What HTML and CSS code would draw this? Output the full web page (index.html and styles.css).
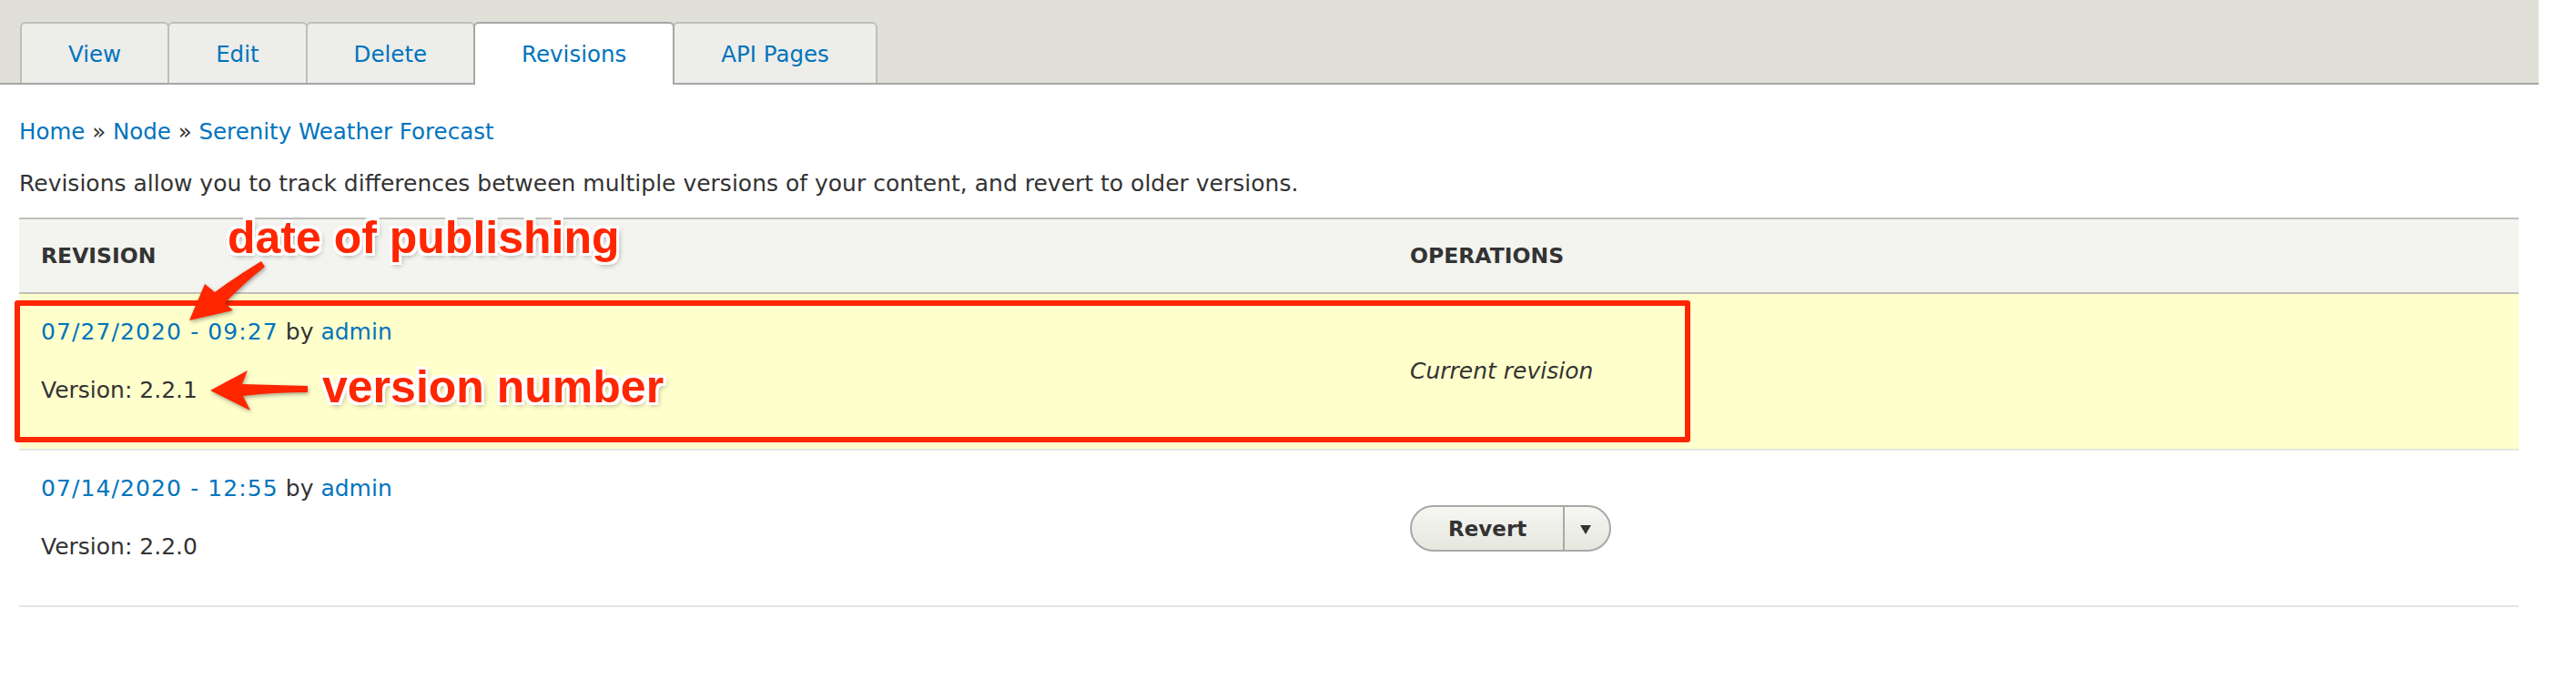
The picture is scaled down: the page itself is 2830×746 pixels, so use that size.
FILE: index.html
```html
<!DOCTYPE html>
<html lang="en">
<head>
<meta charset="utf-8">
<title>Revisions for Serenity Weather Forecast</title>
<link rel="stylesheet" href="styles.css">
</head>
<body>
<header class="tabs-bar">
  <nav class="tabs">
    <a class="tab" href="#">View</a>
    <a class="tab" href="#">Edit</a>
    <a class="tab" href="#">Delete</a>
    <a class="tab tab-active" href="#">Revisions</a>
    <a class="tab" href="#">API Pages</a>
  </nav>
</header>
<main class="content">
  <div class="breadcrumb"><a href="#">Home</a> » <a href="#">Node</a> » <a href="#">Serenity Weather Forecast</a></div>
  <p class="desc">Revisions allow you to track differences between multiple versions of your content, and revert to older versions.</p>
  <table class="revisions">
    <colgroup><col class="col-rev"><col class="col-ops"></colgroup>
    <thead>
      <tr><th>Revision</th><th>Operations</th></tr>
    </thead>
    <tbody>
      <tr class="row-current">
        <td><a class="rev-date" href="#">07/27/2020 - 09:27</a> by <a href="#">admin</a><p class="log">Version: 2.2.1</p></td>
        <td class="ops"><em>Current revision</em></td>
      </tr>
      <tr>
        <td><a class="rev-date" href="#">07/14/2020 - 12:55</a> by <a href="#">admin</a><p class="log">Version: 2.2.0</p></td>
        <td class="ops">
          <div class="dropbutton"><span class="db-main">Revert</span><span class="db-toggle"><span class="db-tri"></span></span></div>
        </td>
      </tr>
    </tbody>
  </table>
</main>

<div class="annot-box"></div>
<div class="annot-label label-date">date of publishing</div>
<div class="annot-label label-version">version number</div>
<svg class="annot-arrows" width="2830" height="746" viewBox="0 0 2830 746" xmlns="http://www.w3.org/2000/svg">
  <path d="M208,352 L225,312 L236,321 Q262,302 287,287 L291,293 Q268,311 247,333 L256,341 Z" fill="#ff2600"/>
  <path d="M231,429 L272,407 L266,422 Q300,423 338,424 L338,431 Q300,431 267,435 L275,451 Z" fill="#ff2600"/>
</svg>
</body>
</html>
```

FILE: styles.css
```css
html, body {
  margin: 0;
  padding: 0;
  background: #fff;
}
body {
  position: relative;
  font-family: "DejaVu Sans", "Liberation Sans", sans-serif;
  font-size: 25px;
  color: #333;
  width: 2830px;
  height: 746px;
  overflow: hidden;
}
a {
  color: #0074bd;
  text-decoration: none;
}

/* Tabs bar */
.tabs-bar {
  display: flex;
  align-items: flex-end;
  height: 91px;
  margin-right: 41px;
  background: #e0e0d8;
  border-bottom: 2px solid #a6a6a6;
  padding-left: 22px;
}
.tabs {
  display: flex;
  align-items: flex-end;
}
.tab {
  display: block;
  height: 65px;
  line-height: 67px;
  padding: 0 51px;
  font-size: 24.5px;
  background: #ededea;
  border: 2px solid #bfbfba;
  border-bottom: none;
  border-radius: 6px 6px 0 0;
  margin-left: -2px;
}
.tab:first-child {
  margin-left: 0;
}
.tab-active {
  position: relative;
  z-index: 1;
  background: #fff;
  border-color: #a6a6a6;
  padding-bottom: 2px;
  margin-bottom: -2px;
}

/* Content */
.content {
  padding: 0 63px 0 21px;
}
.breadcrumb {
  margin-top: 34px;
  font-size: 24.5px;
  line-height: 36px;
  color: #333;
}
.desc {
  margin: 20px 0 0;
  line-height: 37.5px;
}
.revisions {
  margin-top: 18px;
  width: 100%;
  border-collapse: collapse;
  table-layout: fixed;
}
.col-rev {
  width: 1504px;
}
.revisions th {
  height: 80px;
  padding: 0 24px;
  text-align: left;
  text-transform: uppercase;
  font-size: 23.5px;
  font-weight: bold;
  color: #333;
  background: #f3f3ef;
  border-top: 2px solid #bfbfba;
  border-bottom: 2px solid #bfbfba;
  vertical-align: middle;
}
.revisions td {
  padding: 23px 24px;
  line-height: 37.5px;
  border-bottom: 2px solid #e4e4df;
  vertical-align: top;
}
.revisions td.ops {
  vertical-align: middle;
}
.row-current td {
  background: #ffffcc;
}
.rev-date {
  letter-spacing: 1.1px;
}
.log {
  margin: 27px 0 22px;
}
.ops em {
  font-style: italic;
}

/* Drop button */
.dropbutton {
  display: inline-flex;
  align-items: stretch;
  height: 47px;
  border: 2px solid #a8a8a8;
  border-radius: 30px;
  background: linear-gradient(to bottom, #f6f6f3, #e7e7df);
  overflow: hidden;
  margin-top: 2px;
}
.db-main {
  padding: 0 40px;
  line-height: 49px;
  font-size: 23px;
  font-weight: bold;
  color: #333;
}
.db-toggle {
  width: 49px;
  border-left: 2px solid #a8a8a8;
  display: flex;
  align-items: center;
  justify-content: center;
}
.db-tri {
  width: 0;
  height: 0;
  border-left: 6px solid transparent;
  border-right: 6px solid transparent;
  border-top: 10px solid #333;
  margin-left: -4px;
  margin-top: 2px;
}

/* Annotations */
.annot-box {
  position: absolute;
  left: 16px;
  top: 330px;
  width: 1841px;
  height: 156px;
  box-sizing: border-box;
  border: 6px solid #ff2600;
  border-radius: 3px;
}
.annot-label {
  position: absolute;
  font-family: "Liberation Sans", Arial, sans-serif;
  font-weight: bold;
  font-size: 50px;
  line-height: 50px;
  color: #ff2600;
  white-space: nowrap;
  text-shadow:
    -3px -3px 0 #fff, 3px -3px 0 #fff, -3px 3px 0 #fff, 3px 3px 0 #fff,
    0 -3px 0 #fff, 0 3px 0 #fff, -3px 0 0 #fff, 3px 0 0 #fff,
    2px 3px 6px rgba(0, 0, 0, 0.45);
}
.label-date {
  left: 250px;
  top: 236px;
}
.label-version {
  left: 354px;
  top: 400px;
}
.annot-arrows {
  position: absolute;
  left: 0;
  top: 0;
  pointer-events: none;
  filter: drop-shadow(1px 2px 2px rgba(0, 0, 0, 0.35));
}
```
